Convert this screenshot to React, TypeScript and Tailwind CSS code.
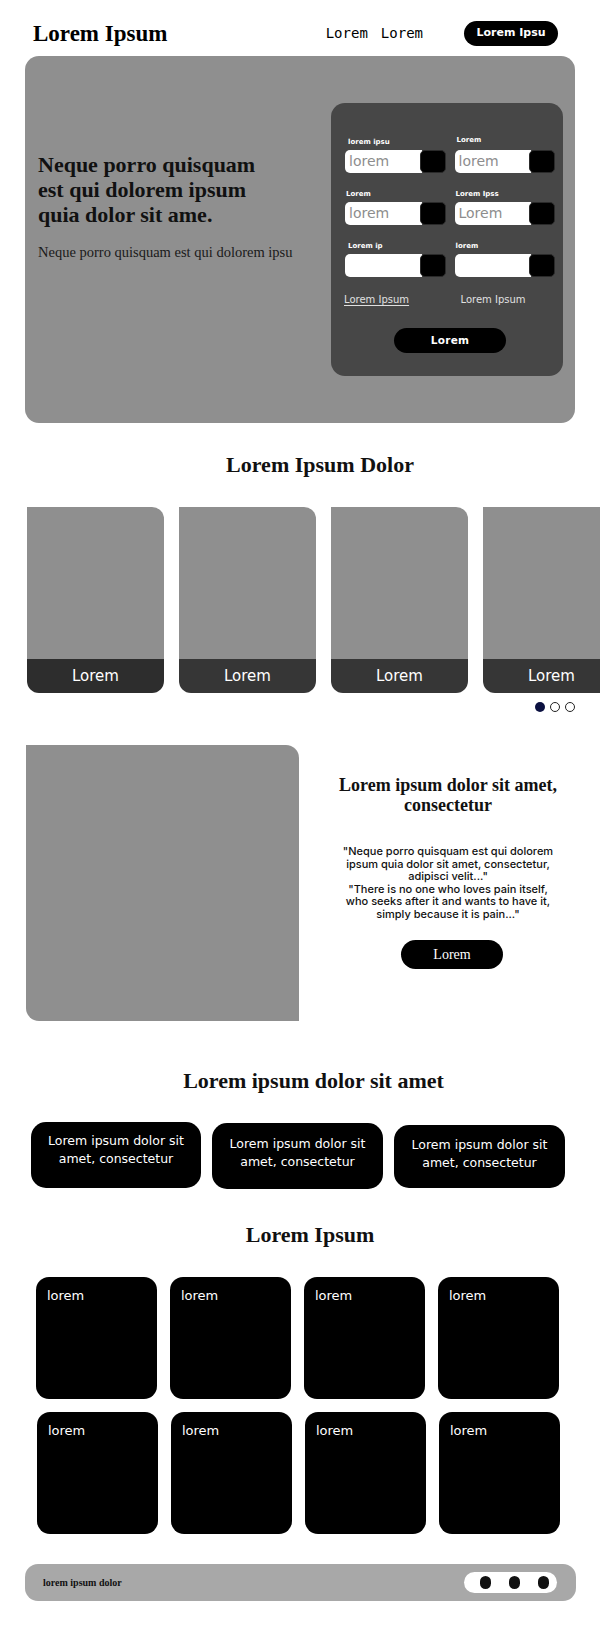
import React from "react";

const serif = "font-['Liberation_Serif',serif]";
const sans = "font-['DejaVu_Sans',sans-serif]";

function Field({ label, placeholder, labelClass = "" }: { label: string; placeholder: string; labelClass?: string }) {
  return (
    <div className="flex flex-col">
      <div className={`h-[10px] text-[7px] leading-[10px] font-bold text-white ${sans} ${labelClass}`}>{label}</div>
      <div className="mt-[3px] flex h-[23px]">
        <div className={`flex flex-1 items-center rounded-l-[5px] bg-white pl-[4px] text-[14px] text-[#8d8d8d] ${sans}`}>{placeholder}</div>
        <div className="-ml-[2px] w-[26px] rounded-[5px] border border-[#2a2a2a] bg-black" />
      </div>
    </div>
  );
}

function Card({ band = "bg-[#333333]" }: { band?: string }) {
  return (
    <div className="flex h-[186px] w-[137px] shrink-0 flex-col overflow-hidden rounded-tl-none rounded-tr-[12px] rounded-b-[12px]">
      <div className="flex-1 bg-[#8f8f8f]" />
      <div className={`flex h-[34px] items-center justify-center text-[15px] text-white ${sans} ${band}`}>Lorem</div>
    </div>
  );
}

function Tile() {
  return (
    <div className={`h-[122px] w-[121px] rounded-[13px] bg-black pl-[11px] pt-[11px] text-[13px] leading-[16px] text-white ${sans}`}>lorem</div>
  );
}

export default function App() {
  return (
    <div className="w-[600px] bg-white pb-[31px]">
      {/* Header */}
      <header className="flex items-center pb-[10px] pl-[33px] pr-[42px] pt-[21px]">
        <div className={`text-[23px] font-bold leading-[25px] text-black ${serif}`}>Lorem Ipsum</div>
        <nav className="ml-auto flex items-center gap-[13px] font-['DejaVu_Sans_Mono',monospace] text-[14px] text-black">
          <span>Lorem</span>
          <span>Lorem</span>
        </nav>
        <button className={`ml-[41px] h-[25px] w-[94px] rounded-full bg-black text-[11px] font-bold text-white ${sans}`}>Lorem Ipsu</button>
      </header>

      {/* Hero */}
      <section className="mx-[25px] flex h-[367px] w-[550px] rounded-[14px] bg-[#8f8f8f]">
        <div className="flex-1 pl-[13px] pt-[96px]">
          <h1 className={`text-[22px] font-bold leading-[25px] text-[#111] ${serif}`}>
            Neque porro quisquam
            <br />
            est qui dolorem ipsum
            <br />
            quia dolor sit ame.
          </h1>
          <p className={`mt-[16px] text-[14.5px] leading-[18px] text-[#1a1a1a] ${serif}`}>Neque porro quisquam est qui dolorem ipsu</p>
        </div>
        <div className="mr-[12px] mt-[47px] h-[273px] w-[232px] rounded-[14px] bg-[#474747] pb-[24px] pl-[14px] pr-[8px] pt-[34px]">
          <div className="grid grid-cols-2 gap-x-[9px] gap-y-[16px]">
            <Field label="lorem ipsu" placeholder="lorem" labelClass="ml-[3px]" />
            <Field label="Lorem" placeholder="lorem" labelClass="ml-[2px] -mt-[2px] mb-[2px]" />
            <Field label="Lorem" placeholder="lorem" labelClass="ml-[1px]" />
            <Field label="Lorem Ipss" placeholder="Lorem" labelClass="ml-[1px]" />
            <Field label="Lorem ip" placeholder="" labelClass="ml-[3px]" />
            <Field label="lorem" placeholder="" labelClass="ml-[1px]" />
          </div>
          <div className={`mt-[16px] grid grid-cols-2 gap-x-[9px] text-[10px] leading-[14px] text-[#e0e0e0] ${sans}`}>
            <span className="-ml-[1px] underline underline-offset-2">Lorem Ipsum</span>
            <span className="ml-[6px]">Lorem Ipsum</span>
          </div>
          <button className={`ml-[49px] mt-[21px] h-[25px] w-[112px] rounded-full bg-black text-[10.5px] font-bold tracking-[0.3px] text-white ${sans}`}>Lorem</button>
        </div>
      </section>

      {/* Carousel */}
      <h2 className={`mt-[27px] pl-[40px] text-center text-[22px] font-bold leading-[30px] text-[#111] ${serif}`}>Lorem Ipsum Dolor</h2>
      <div className="mt-[27px] flex gap-[15px] overflow-hidden pl-[27px]">
        <Card band="bg-[#2d2d2d]" />
        <Card band="bg-[#363636]" />
        <Card band="bg-[#363636]" />
        <Card band="bg-[#363636]" />
      </div>
      <div className="mt-[9px] flex justify-end gap-[5px] pr-[25px]">
        <span className="h-[10px] w-[10px] rounded-full bg-[#0b1040]" />
        <span className="h-[10px] w-[10px] rounded-full border-[1.5px] border-[#222]" />
        <span className="h-[10px] w-[10px] rounded-full border-[1.5px] border-[#222]" />
      </div>

      {/* Feature */}
      <section className="mt-[33px] flex pl-[26px]">
        <div className="h-[276px] w-[273px] rounded-tr-[13px] rounded-bl-[13px] bg-[#8f8f8f]" />
        <div className="flex w-[298px] flex-col items-center pt-[30px] text-center">
          <h3 className={`text-[18px] font-bold leading-[20px] text-[#111] ${serif}`}>
            Lorem ipsum dolor sit amet,
            <br />
            consectetur
          </h3>
          <p className="mt-[30px] font-['Inter',sans-serif] text-[11px] font-medium leading-[12.5px] text-[#111]">
            "Neque porro quisquam est qui dolorem
            <br />
            ipsum quia dolor sit amet, consectetur,
            <br />
            adipisci velit..."
            <br />
            "There is no one who loves pain itself,
            <br />
            who seeks after it and wants to have it,
            <br />
            simply because it is pain..."
          </p>
          <button className={`ml-[8px] mt-[20px] h-[29px] w-[102px] rounded-full bg-black text-[14px] text-white ${serif}`}>Lorem</button>
        </div>
      </section>

      {/* Boxes */}
      <h2 className={`mt-[45px] pl-[27px] text-center text-[22px] font-bold leading-[30px] text-[#111] ${serif}`}>Lorem ipsum dolor sit amet</h2>
      <div className={`mt-[26px] flex items-start gap-[11px] pl-[31px] text-center text-[12.5px] leading-[18px] text-white ${sans}`}>
        <div className="flex h-[66px] w-[170px] items-start justify-center rounded-[15px] bg-black pt-[10px]">
          Lorem ipsum dolor sit
          <br />
          amet, consectetur
        </div>
        <div className="mt-[1px] flex h-[66px] w-[171px] items-start justify-center rounded-[15px] bg-black pt-[12px]">
          Lorem ipsum dolor sit
          <br />
          amet, consectetur
        </div>
        <div className="mt-[3px] flex h-[63px] w-[171px] items-start justify-center rounded-[15px] bg-black pt-[11px]">
          Lorem ipsum dolor sit
          <br />
          amet, consectetur
        </div>
      </div>

      {/* Grid */}
      <h2 className={`mt-[31px] pl-[20px] text-center text-[22px] font-bold leading-[30px] text-[#111] ${serif}`}>Lorem Ipsum</h2>
      <div className="mt-[27px] flex flex-col gap-[13px]">
        <div className="flex gap-[13px] pl-[36px]">
          <Tile />
          <Tile />
          <Tile />
          <Tile />
        </div>
        <div className="flex gap-[13px] pl-[37px]">
          <Tile />
          <Tile />
          <Tile />
          <Tile />
        </div>
      </div>

      {/* Footer */}
      <footer className="mx-[25px] mt-[30px] flex h-[37px] w-[551px] items-center rounded-[13px] bg-[#a8a8a8] pl-[18px] pr-[19px]">
        <span className={`text-[10px] font-bold text-[#111] ${serif}`}>lorem ipsum dolor</span>
        <div className="ml-auto flex h-[21px] w-[93px] items-center justify-start gap-[18px] rounded-full bg-white pl-[16px]">
          <span className="h-[13px] w-[11px] rounded-full bg-[#111]" />
          <span className="h-[13px] w-[11px] rounded-full bg-[#111]" />
          <span className="h-[13px] w-[11px] rounded-full bg-[#111]" />
        </div>
      </footer>
    </div>
  );
}
